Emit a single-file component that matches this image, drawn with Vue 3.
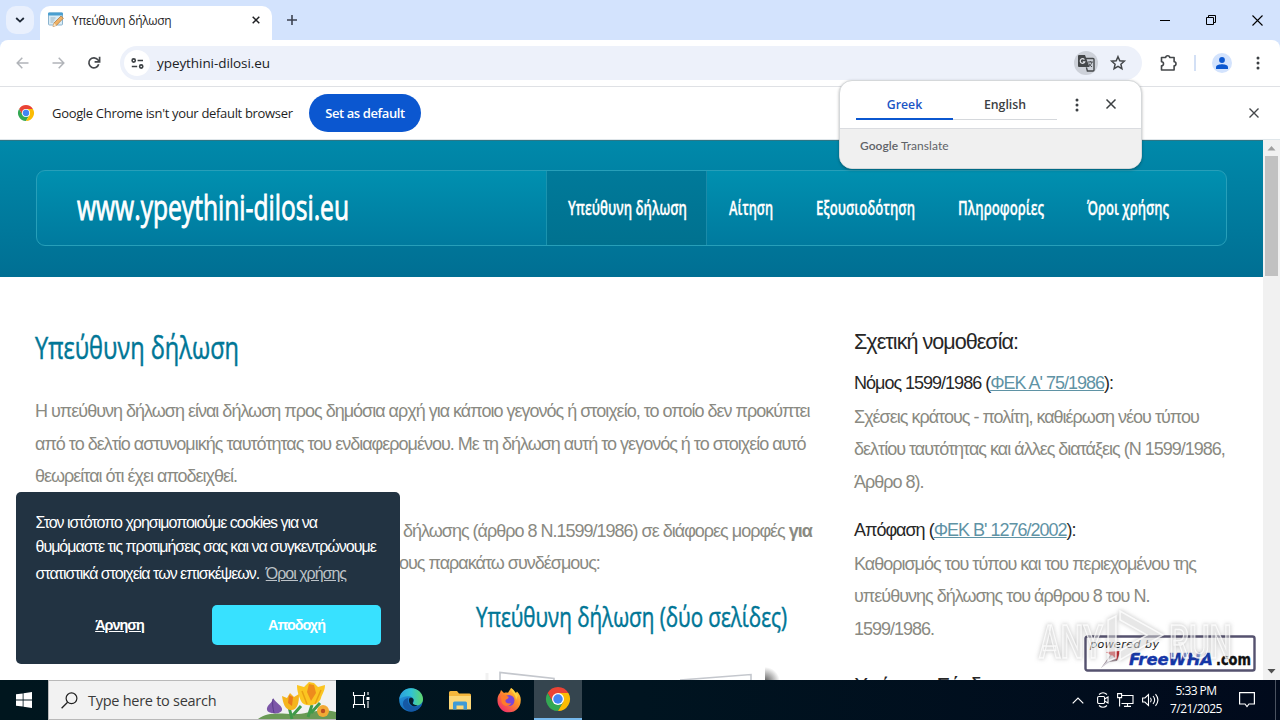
<template>
  <div class="desktop">
    <header class="browser">
      <div class="tabstrip">
        <button class="tab-search" type="button">
          <svg width="10" height="6" viewBox="0 0 10 6"><path d="M1.2 1l3.8 3.6L8.8 1" fill="none" stroke="#1f2937" stroke-width="1.8" /></svg>
        </button>
        <div class="tab">
          <svg class="favicon" width="16" height="16" viewBox="0 0 16 16">
            <rect x="0.5" y="1" width="14" height="12" rx="1" fill="#d9ebf5" stroke="#8cb4cf" />
            <rect x="0" y="0.5" width="15" height="3" rx="1" fill="#4a9fd0" />
            <path d="M2.5 6h5M2.5 8h4M2.5 10h3" stroke="#9bb5c4" />
            <path d="M5 14.5l1-3.5 7-7 2.4 2.2-7 7.2z" fill="#f0b266" stroke="#a8743b" stroke-width="0.7" />
            <path d="M5 14.5l1-3.5 2.4 2.4z" fill="#f7e3c4" />
          </svg>
          <span class="tab-title">Υπεύθυνη δήλωση</span>
          <svg width="8" height="8" viewBox="0 0 8 8"><path d="M0.7 0.7l6.6 6.6M7.3 0.7L0.7 7.3" stroke="#1f2023" stroke-width="1.5" /></svg>
        </div>
        <svg class="new-tab" width="12" height="12" viewBox="0 0 12 12"><path d="M6 1v10M1 6h10" stroke="#3c4250" stroke-width="1.6" /></svg>
        <div class="window-controls">
          <svg width="10" height="10" viewBox="0 0 10 10"><path d="M0 5.5h10" stroke="#000" /></svg>
          <svg width="10" height="10" viewBox="0 0 10 10"><path d="M0.5 2.5h7v7h-7zM2.5 2.5v-2h7v7h-2" fill="none" stroke="#000" /></svg>
          <svg width="11" height="11" viewBox="0 0 11 11"><path d="M0.5 0.5l10 10M10.5 0.5l-10 10" stroke="#000" stroke-width="1.1" /></svg>
        </div>
      </div>

      <div class="toolbar">
        <svg class="nav-back" width="13" height="12" viewBox="0 0 13 12"><path d="M6.3 0.8L1.2 6l5.1 5.2M1.4 6H12.5" fill="none" stroke="#b1b4b9" stroke-width="1.5" /></svg>
        <svg class="nav-forward" width="13" height="12" viewBox="0 0 13 12"><path d="M6.7 0.8L11.8 6l-5.1 5.2M11.6 6H0.5" fill="none" stroke="#b1b4b9" stroke-width="1.5" /></svg>
        <svg class="nav-reload" width="14" height="14" viewBox="0 0 14 14">
          <path d="M11.7 8.2A5 5 0 1 1 10.9 3.8L12 5" fill="none" stroke="#45484c" stroke-width="1.7" />
          <path d="M12.6 0.8V5.8H7.6" fill="none" stroke="#45484c" stroke-width="1.7" />
        </svg>
        <div class="omnibox">
          <span class="site-info">
            <svg width="13" height="11" viewBox="0 0 13 11" fill="none" stroke="#3c4043" stroke-width="1.6">
              <circle cx="2.7" cy="2.5" r="1.6" /><path d="M6.6 2.5H12M0.8 8.5h5.4" /><circle cx="10.2" cy="8.5" r="1.6" />
            </svg>
          </span>
          <span class="url">ypeythini-dilosi.eu</span>
          <span class="translate-badge">
            <svg width="18" height="18" viewBox="0 0 18 18">
              <path d="M2 1h6l4.5 12H2a1 1 0 0 1-1-1V2a1 1 0 0 1 1-1z" fill="#44474a" />
              <path d="M8.8 4.5H16a1 1 0 0 1 1 1V16a1 1 0 0 1-1 1h-5.6l-1-3.6" fill="none" stroke="#44474a" stroke-width="1.4" />
              <path d="M7.4 5.6a2.3 2.3 0 1 0 .3 2.3H5.8" fill="none" stroke="#dfe1e6" stroke-width="1.2" />
              <path d="M11 8h4.8M13.3 7v1M15 8c-.5 2-2 3.5-3 4.2M12 9.500c.7 1.600 1.900 2.600 3 3.400" fill="none" stroke="#44474a" />
            </svg>
          </span>
          <svg width="16" height="16" viewBox="0 0 16 16"><path d="M8 1.700l1.800 4.100 4.500.4-3.400 3 1 4.400L8 11.300l-3.900 2.300 1-4.400-3.400-3 4.500-.4z" fill="none" stroke="#44474a" stroke-width="1.5" /></svg>
        </div>
        <svg class="extensions" width="18" height="17" viewBox="0 0 18 17">
          <path d="M2.500 2.500h4.200a2 1.700 0 0 1 4 0h4.400v4.200a1.900 2 0 0 1 0 4V15H2.500v-4.200a2 2 0 0 0 0-4z" fill="none" stroke="#44474a" stroke-width="1.600" stroke-linejoin="round" />
        </svg>
        <span class="toolbar-divider"></span>
        <span class="avatar">
          <svg width="12" height="12" viewBox="0 0 12 12" fill="#0b57d0"><circle cx="6" cy="3" r="2.900" /><path d="M0 12V10.200C0 8 3.600 7.200 6 7.200s6 .8 6 3V12z" /></svg>
        </span>
        <svg class="menu-dots" width="4" height="14" viewBox="0 0 4 14" fill="#3c4043"><circle cx="2" cy="2" r="1.500" /><circle cx="2" cy="7" r="1.500" /><circle cx="2" cy="12" r="1.500" /></svg>
      </div>

      <div class="infobar">
        <svg width="16" height="16" viewBox="0 0 48 48">
          <circle cx="24" cy="24" r="24" fill="#fff" />
          <path d="M24 12h20.800A24 24 0 0 0 3.200 12l10.400 18z" fill="#ea4335" />
          <path d="M13.600 30L3.200 12A24 24 0 0 0 24 48l10.400-18z" fill="#34a853" />
          <path d="M34.400 30L24 48a24 24 0 0 0 20.800-36H24z" fill="#fbbc04" />
          <circle cx="24" cy="24" r="12" fill="#fff" /><circle cx="24" cy="24" r="9.500" fill="#4285f4" />
        </svg>
        <span class="infobar-text">Google Chrome isn't your default browser</span>
        <button class="infobar-button" type="button">Set as default</button>
        <svg class="infobar-close" width="10" height="10" viewBox="0 0 10 10"><path d="M0.500 0.500l9 9M9.500 0.500l-9 9" stroke="#44474a" stroke-width="1.400" /></svg>
      </div>
    </header>

    <div class="viewport">
      <div class="page">
        <div class="masthead">
          <div class="masthead-box">
            <svg class="logo" width="273" height="50">
              <text x="1" y="37" textLength="272" lengthAdjust="spacingAndGlyphs">www.ypeythini-dilosi.eu</text>
            </svg>
            <nav class="menu">
              <a v-for="item in menu" :key="item.label" class="menu-item" :class="{ 'is-active': item.active }">
                <svg :width="item.width" height="30">
                  <text x="0" y="22" :textLength="item.width" lengthAdjust="spacingAndGlyphs">{{ item.label }}</text>
                </svg>
              </a>
            </nav>
          </div>
        </div>

        <div class="columns">
          <main class="content">
            <svg class="title" width="206" height="46">
              <text x="0" y="33" textLength="204" lengthAdjust="spacingAndGlyphs">Υπεύθυνη δήλωση</text>
            </svg>
            <p class="intro">
              Η υπεύθυνη δήλωση είναι δήλωση προς δημόσια αρχή για κάποιο γεγονός ή στοιχείο, το οποίο δεν προκύπτει<br />
              από το δελτίο αστυνομικής ταυτότητας του ενδιαφερομένου. Με τη δήλωση αυτή το γεγονός ή το στοιχείο αυτό<br />
              θεωρείται ότι έχει αποδειχθεί.
            </p>
            <p class="forms">
              <span class="forms-first">δήλωσης (άρθρο 8 Ν.1599/1986) σε διάφορες μορφές <b>για</b></span><br />
              ους παρακάτω συνδέσμους:
            </p>
            <div class="document">
              <svg class="subtitle" width="314" height="40">
                <text x="1" y="29" textLength="311" lengthAdjust="spacingAndGlyphs">Υπεύθυνη δήλωση (δύο σελίδες)</text>
              </svg>
              <svg class="sheet" width="310" height="18" viewBox="0 0 310 18">
                <defs>
                  <radialGradient id="corner" cx="0" cy="1" r="1">
                    <stop offset="0" stop-color="#555" /><stop offset="1" stop-color="#fff" />
                  </radialGradient>
                </defs>
                <path d="M25 18V10.500l54 6v2M205 18l71-5.500V18" fill="none" stroke="#c4c7cd" stroke-width="1.600" />
                <path d="M12 11v7" stroke="#f1f1f1" stroke-width="3" />
                <rect x="290" y="5" width="15" height="15" fill="url(#corner)" />
              </svg>
            </div>
          </main>

          <aside class="sidebar">
            <h3>Σχετική νομοθεσία:</h3>
            <template v-for="law in laws" :key="law.link">
              <h4>{{ law.name }} (<a>{{ law.link }}</a>):</h4>
              <p>
                <template v-for="line in law.lines" :key="line">{{ line }}<br /></template>
              </p>
            </template>
            <h3 class="links-title">Χρήσιμοι Σύνδεσμοι:</h3>
          </aside>
        </div>

        <div class="cookie">
          <div class="cookie-text">
            Στον ιστότοπο χρησιμοποιούμε cookies για να<br />
            θυμόμαστε τις προτιμήσεις σας και να συγκεντρώνουμε<br />
            <span class="cookie-last">στατιστικά στοιχεία των επισκέψεων. <a class="cookie-link">Όροι χρήσης</a></span>
          </div>
          <div class="cookie-actions">
            <a class="cookie-deny">Άρνηση</a>
            <a class="cookie-allow">Αποδοχή</a>
          </div>
        </div>

        <div class="host-badge">
          <svg width="172" height="38" viewBox="0 0 172 38">
            <rect x="1.500" y="1.500" width="169" height="34" rx="2" fill="#fff" stroke="#55526f" stroke-width="2.400" />
            <text x="6" y="13" class="powered" textLength="69">powered by</text>
            <path d="M17 33l10-14 9-1-3 8-9 1z" fill="#9a8a92" />
            <path d="M22 17l14-1-3 9-5-4z" fill="#c92027" />
            <path d="M17 33l11-13 3 3z" fill="#d6d3dc" />
            <text x="45" y="30" class="brand" textLength="84" lengthAdjust="spacingAndGlyphs">FreeWHA</text>
            <text x="132" y="30" class="brand brand-tld" textLength="35" lengthAdjust="spacingAndGlyphs">.com</text>
          </svg>
        </div>

        <svg class="watermark" width="204" height="64" viewBox="0 0 204 64">
          <g class="mark">
            <text x="5" y="50" textLength="64" lengthAdjust="spacingAndGlyphs">ANY</text>
            <text x="135" y="50" textLength="63" lengthAdjust="spacingAndGlyphs">RUN</text>
            <path d="M74 12l8-4v42l-8 3zM86 3l43 24-43 25v-9l27-16-27-15z" />
          </g>
        </svg>
      </div>

      <div class="scrollbar">
        <svg width="17" height="15"><path d="M4.500 10.500h8l-4-4.500z" fill="#a0a0a0" /></svg>
        <div class="scroll-thumb"></div>
        <svg class="scroll-down" width="17" height="17"><path d="M4.500 6h8l-4 4.500z" fill="#505050" /></svg>
      </div>
    </div>

    <div class="translate">
      <div class="translate-top">
        <div class="lang is-active">Greek</div>
        <div class="lang">English</div>
        <svg class="translate-dots" width="4" height="14" viewBox="0 0 4 14" fill="#3c4043"><circle cx="2" cy="2" r="1.500" /><circle cx="2" cy="7" r="1.500" /><circle cx="2" cy="12" r="1.500" /></svg>
        <svg class="translate-close" width="10" height="10" viewBox="0 0 10 10"><path d="M0.500 0.500l9 9M9.500 0.500l-9 9" stroke="#3c4043" stroke-width="1.500" /></svg>
      </div>
      <div class="translate-foot"><b>Google</b> Translate</div>
    </div>

    <footer class="taskbar">
      <div class="start">
        <svg width="16" height="16" viewBox="0 0 16 16" fill="#fff"><path d="M0 2.300l6.700-.9v6.200H0zM7.500 1.300L16 0v7.600H7.500zM0 8.400h6.700v6.200L0 13.700zM7.500 8.400H16V16l-8.500-1.200z" /></svg>
      </div>
      <div class="search">
        <svg width="17" height="17" viewBox="0 0 17 17"><circle cx="10.500" cy="6.300" r="5.400" fill="none" stroke="#222" stroke-width="1.200" /><path d="M6.600 10.200L0.600 16.200" stroke="#222" stroke-width="1.300" /></svg>
        <span class="search-text">Type here to search</span>
        <svg class="flowers" width="80" height="38" viewBox="0 0 80 38">
          <path d="M2 38C14 29 30 34 42 33s22-6 38-2v7z" fill="#6a9a55" />
          <path d="M36 38l-3-12M52 36l4-12M37 34l8-9M55 32l9-10" stroke="#3f9a4a" stroke-width="3" />
          <path d="M17 17c0 5-7 7-6 12 1 4 14 5 15 0 1-4-6-7-9-12z" fill="#7c56a8" />
          <path d="M17 18c-1 5 0 9 1 14" stroke="#5a3b8a" fill="none" />
          <path d="M26 15l5 2 3-5 4 4 5-3c0 8-1 16-8 16-6 0-8-7-9-14z" fill="#f5b51d" />
          <path d="M33 14l4 2-1 9-4-3z" fill="#ea7a1b" />
          <path d="M41 4l7 2 5-5 5 1 4 4 7-2c0 6-3 9-4 13-2 8-17 10-20 3-2-5-4-9-4-16z" fill="#fbc521" />
          <path d="M53 3l5 1 2 8-5 8-4-9z" fill="#ee8b1d" />
          <path d="M46 10l5 13M65 9l-6 14" stroke="#e9a012" stroke-width="1.500" />
          <circle cx="67" cy="30" r="6" fill="#f3aa35" /><circle cx="67" cy="30" r="2.200" fill="#bd4f22" />
        </svg>
      </div>
      <div class="task">
        <svg width="17" height="16" viewBox="0 0 17 16" fill="none" stroke="#fff" stroke-width="1.100">
          <path d="M0.500 0v3.500h11V0M0.500 16v-3.500h11V16M1.500 3.500v9M10.500 3.500v9M15 0v3M15 9v7" /><path d="M13.500 5h3v3h-3z" fill="#fff" stroke="none" />
        </svg>
      </div>
      <div class="task">
        <svg width="24" height="24" viewBox="0 0 24 24">
          <defs>
            <linearGradient id="edgeTop" x1="0" x2="1"><stop offset="0" stop-color="#2b9fdc" /><stop offset="0.500" stop-color="#31c2d4" /><stop offset="1" stop-color="#5fd76a" /></linearGradient>
            <linearGradient id="edgeBody" x1="0" y1="0" x2="0.600" y2="1"><stop offset="0" stop-color="#2aa4e6" /><stop offset="1" stop-color="#0f5db0" /></linearGradient>
          </defs>
          <circle cx="12" cy="12" r="11.800" fill="url(#edgeBody)" />
          <path d="M9 11c-1 7 6 10 13 7-3 5-9 6.500-14 4C2 18.500 3 11 9 10z" fill="#1558a4" />
          <path d="M0.300 11C1.500 4 6.500 0.200 12 0.200 19 0.200 24 5.500 24 11c0 4-3 6.500-6.500 6.500-3 0-4-1.200-3.600-2.200 2.100-2 1.100-6.800-4.400-7.100-4-.2-7.700 1.300-9.200 2.800z" fill="url(#edgeTop)" />
          <path d="M10 11c1-2 4-1.500 4.500.5.300 1.600-.8 2.500-.7 3.500.2 1.500 2.500 2.500 5 2.200-4 3-9.500-.6-8.800-6.200z" fill="#071c2c" />
        </svg>
      </div>
      <div class="task">
        <svg width="22" height="19" viewBox="0 0 22 19">
          <path d="M0 1.500A1.500 1.500 0 0 1 1.500 0H8l2 2.500h10.500A1.500 1.500 0 0 1 22 4v14H0z" fill="#f5b73c" />
          <path d="M0 5h22v13.500H0z" fill="#fdd878" />
          <path d="M4 18.500V12a1.500 1.500 0 0 1 1.500-1.500h11A1.500 1.500 0 0 1 18 12v6.500h-3.500v-4h-7v4z" fill="#3f9bd6" />
        </svg>
      </div>
      <div class="task">
        <svg width="24" height="24" viewBox="0 0 24 24">
          <defs>
            <linearGradient id="fox" x1="1" y1="0" x2="0.200" y2="1"><stop offset="0" stop-color="#ffe14a" /><stop offset="0.450" stop-color="#ff9226" /><stop offset="1" stop-color="#f0286e" /></linearGradient>
          </defs>
          <path d="M3 5l1-3 3 3c1-.5 3-.5 4-.3L14 0c3 1.500 4 4 4.500 5.500L20 3.500c3 3 4 6 3.700 9A11.600 11.600 0 0 1 .5 13C.4 9.500 1 7 3 5z" fill="url(#fox)" />
          <circle cx="12" cy="12.500" r="5.500" fill="#7a45d8" />
          <path d="M4 8c3-1.500 5 0 7 .5 1.500.5 0 2.500-2 3-2 2.500 2 5 5 3.500-1 4-8 4-9.500-1z" fill="#ff7b2b" />
          <path d="M14 0c0 4 5 6 5 12l2-5z" fill="#ffd33f" />
        </svg>
      </div>
      <div class="task is-current">
        <svg width="24" height="24" viewBox="0 0 48 48">
          <path d="M24 12h20.800A24 24 0 0 0 3.200 12l10.400 18z" fill="#ea4335" />
          <path d="M13.600 30L3.200 12A24 24 0 0 0 24 48l10.400-18z" fill="#34a853" />
          <path d="M34.400 30L24 48a24 24 0 0 0 20.800-36H24z" fill="#fbbc04" />
          <circle cx="24" cy="24" r="12" fill="#fff" /><circle cx="24" cy="24" r="9.500" fill="#4285f4" />
        </svg>
      </div>
      <div class="tray">
        <svg width="12" height="7" viewBox="0 0 12 7"><path d="M0.700 6.300L6 1l5.300 5.300" fill="none" stroke="#fff" stroke-width="1.200" /></svg>
        <svg width="12" height="16" viewBox="0 0 12 16" fill="none" stroke="#fff" stroke-width="1.100"><rect x="0.600" y="4.500" width="7" height="7" rx="1.200" /><path d="M7.600 7l3.400-2v6L7.600 9M2 2.500C4.500.3 7.500.3 10 2.500M2 13.500c2.500 2.200 5.500 2.200 8 0" /></svg>
        <svg width="17" height="14" viewBox="0 0 17 14" fill="none" stroke="#fff" stroke-width="1.100"><path d="M5 2.500h11v8H4.500M10.500 10.500v3M7 13.400h7M0.600 0.600h4v4h-4zM2.600 4.600v8.800" /></svg>
        <svg width="17" height="14" viewBox="0 0 17 14" fill="none" stroke="#fff" stroke-width="1.100"><path d="M0.600 5h2.300L6.500 1.500v11L2.900 9H.6zM8.500 4.800c1 1.400 1 3 0 4.400M11 3c2 2.400 2 5.600 0 8M13.500 1.200c3 3.600 3 8 0 11.600" /></svg>
        <div class="clock"><span class="clock-time">5:33 PM</span><span>7/21/2025</span></div>
        <svg width="16" height="16" viewBox="0 0 16 16"><path d="M0.600 0.600h14.800v11.400H10L8 14.500 6 12H.6z" fill="none" stroke="#fff" stroke-width="1.200" /></svg>
        <span class="show-desktop"></span>
      </div>
    </footer>
  </div>
</template>

<script setup>
const menu = [
  { label: 'Υπεύθυνη δήλωση', width: 119, active: true },
  { label: 'Αίτηση', width: 44 },
  { label: 'Εξουσιοδότηση', width: 99 },
  { label: 'Πληροφορίες', width: 86 },
  { label: 'Όροι χρήσης', width: 82 },
]

const laws = [
  {
    name: 'Νόμος 1599/1986',
    link: "ΦΕΚ Α' 75/1986",
    lines: [
      'Σχέσεις κράτους - πολίτη, καθιέρωση νέου τύπου',
      'δελτίου ταυτότητας και άλλες διατάξεις (Ν 1599/1986,',
      'Άρθρο 8).',
    ],
  },
  {
    name: 'Απόφαση',
    link: "ΦΕΚ Β' 1276/2002",
    lines: [
      'Καθορισμός του τύπου και του περιεχομένου της',
      'υπεύθυνης δήλωσης του άρθρου 8 του Ν.',
      '1599/1986.',
    ],
  },
]
</script>

<style>
body {
  margin: 0;
  overflow: hidden;
}
</style>

<style scoped>
.desktop {
  position: relative;
  width: 1280px;
  height: 720px;
  overflow: hidden;
  display: flex;
  flex-direction: column;
  background: #fff;
  font-family: 'Open Sans', 'Noto Sans', sans-serif;
  white-space: nowrap;
}

.desktop svg {
  display: block;
  flex-shrink: 0;
  overflow: visible;
}

/* browser chrome */
.browser {
  height: 140px;
  flex-shrink: 0;
  background: #d3e3fd;
}

.tabstrip {
  height: 40px;
  display: flex;
  align-items: center;
}

.tab-search {
  width: 28px;
  height: 28px;
  margin-left: 6px;
  padding: 0;
  border: none;
  border-radius: 10px;
  background: #e9f0fd;
  display: flex;
  align-items: center;
  justify-content: center;
}

.tab {
  width: 232px;
  height: 34px;
  margin: 6px 0 0 6px;
  padding: 0 12px 6px 8px;
  display: flex;
  align-items: center;
  border-radius: 10px 10px 0 0;
  background: #fff;
  box-sizing: border-box;
}

.tab-title {
  flex: 1;
  margin-left: 8px;
  color: #1f1f1f;
  font-size: 12px;
  letter-spacing: -0.3px;
}

.new-tab {
  margin-left: 14px;
}

.window-controls {
  margin-left: auto;
  margin-right: 17px;
  display: flex;
  align-items: center;
  gap: 36px;
}

.toolbar {
  height: 46px;
  display: flex;
  align-items: center;
  border-bottom: 1px solid #dfe1e5;
  border-radius: 8px 8px 0 0;
  background: #fff;
}

.nav-back {
  margin-left: 16px;
}

.nav-forward {
  margin-left: 23px;
}

.nav-reload {
  margin-left: 22px;
}

.omnibox {
  width: 1022px;
  height: 34px;
  margin-left: 19px;
  padding: 0 16px 0 4px;
  display: flex;
  align-items: center;
  border-radius: 17px;
  background: #edf1fa;
  box-sizing: border-box;
}

.site-info {
  width: 26px;
  height: 26px;
  display: flex;
  align-items: center;
  justify-content: center;
  border-radius: 50%;
  background: #fff;
}

.url {
  flex: 1;
  margin-left: 7px;
  color: #202124;
  font-size: 13.5px;
  letter-spacing: -0.07px;
}

.translate-badge {
  width: 24px;
  height: 24px;
  margin-right: 12px;
  display: flex;
  align-items: center;
  justify-content: center;
  border-radius: 50%;
  background: #cdd1d9;
}

.extensions {
  margin-left: 17px;
}

.toolbar-divider {
  width: 2px;
  height: 16px;
  margin-left: 17px;
  background: #d3e0f5;
}

.avatar {
  width: 20px;
  height: 20px;
  margin-left: 16px;
  display: flex;
  align-items: center;
  justify-content: center;
  border-radius: 50%;
  background: #d3e3fd;
}

.menu-dots {
  margin-left: 24px;
}

.infobar {
  height: 53px;
  padding: 0 21px 0 18px;
  display: flex;
  align-items: center;
  border-bottom: 1px solid #dfe6ea;
  background: #fff;
  box-sizing: border-box;
}

.infobar-text {
  width: 241px;
  margin-left: 18px;
  color: #1f1f1f;
  font-size: 13px;
  letter-spacing: -0.32px;
}

.infobar-button {
  width: 112px;
  height: 38px;
  margin-left: 16px;
  padding: 0;
  border: none;
  border-radius: 19px;
  background: #0b57d0;
  color: #fff;
  font: 600 13px 'Open Sans', sans-serif;
  letter-spacing: -0.4px;
}

.infobar-close {
  margin-left: auto;
}

/* web page */
.viewport {
  height: 540px;
  flex-shrink: 0;
  display: flex;
}

.page {
  position: relative;
  width: 1263px;
  height: 540px;
  overflow: hidden;
  background: #fff;
  font-family: 'Liberation Sans', Arial, sans-serif;
  font-size: 18px;
  line-height: 32.4px;
  letter-spacing: -1px;
  color: #8a8a82;
}

.masthead {
  height: 137px;
  padding: 30px 36px 0;
  border-top: 1px solid #2c7686;
  background: linear-gradient(#0089aa, #006f93);
  box-sizing: border-box;
}

.masthead-box {
  height: 76px;
  margin-top: -1px;
  padding-left: 39px;
  display: flex;
  align-items: center;
  border: 1px solid #279fb9;
  border-radius: 9px;
  background: linear-gradient(#0090b0, #007a9e);
  box-sizing: border-box;
}

.logo text {
  font-family: 'Open Sans', sans-serif;
  font-size: 35px;
  letter-spacing: 0;
  fill: #fff;
  stroke: #fff;
  stroke-width: 0.9px;
}

.menu {
  height: 100%;
  margin-left: 197px;
  display: flex;
}

.menu-item {
  padding: 0 21px 0 22px;
  display: flex;
  align-items: center;
}

.menu-item.is-active {
  padding: 0 19px 0 21px;
  border-left: 1px solid #1b93ae;
  border-right: 1px solid #1b8ba9;
  background: linear-gradient(#007a9a, #00718f);
}

.menu-item text {
  font-family: 'Open Sans', sans-serif;
  font-size: 19px;
  font-weight: 600;
  letter-spacing: 0;
  fill: #fff;
  stroke: #fff;
  stroke-width: 0.3px;
}

.columns {
  display: flex;
}

.content {
  width: 854px;
  flex-shrink: 0;
  padding: 49px 0 0 35px;
  box-sizing: border-box;
}

.title text,
.subtitle text {
  font-family: 'Open Sans', sans-serif;
  letter-spacing: 0;
  fill: #007696;
  stroke: #007696;
  stroke-width: 0.5px;
}

.title text {
  font-size: 31px;
}

.subtitle text {
  font-size: 27px;
}

.intro {
  margin: 23.4px 0 22.4px;
}

.forms {
  margin: 0;
  padding-left: 364px;
}

.forms-first {
  margin-left: 4px;
}

.document {
  padding-left: 440px;
}

.subtitle {
  margin-top: 18.6px;
}

.sheet {
  margin-top: 24px;
}

.sidebar {
  padding-top: 48px;
}

.sidebar h3 {
  margin: 0;
  color: #272727;
  font-size: 21.6px;
  font-weight: 400;
  line-height: 34px;
}

.sidebar h4 {
  margin: 8px 0 1.6px;
  color: #272727;
  font-size: 18px;
  font-weight: 400;
}

.sidebar h4 a {
  color: #5f93a5;
  text-decoration: underline;
}

.sidebar p {
  margin: 0 0 15.700px;
}

.sidebar .links-title {
  margin-top: 24px;
}

/* cookie notice */
.cookie {
  position: absolute;
  left: 16px;
  top: 352px;
  width: 384px;
  height: 172px;
  padding: 19px 19px 19px;
  display: flex;
  flex-direction: column;
  justify-content: space-between;
  border-radius: 5px;
  background: #223342;
  color: #fff;
  font-size: 16px;
  line-height: 24px;
  box-sizing: border-box;
}

.cookie-text {
  padding-left: 0.5px;
}

.cookie-last {
  line-height: 30px;
}

.cookie-link {
  margin-left: 3px;
  color: #bcc2c7;
  text-decoration: underline;
}

.cookie-actions {
  display: flex;
  font-size: 14.4px;
  font-weight: 700;
  line-height: 40px;
  text-align: center;
}

.cookie-deny {
  width: 169px;
  margin-right: 8px;
  text-decoration: underline;
}

.cookie-allow {
  width: 169px;
  border-radius: 5px;
  background: #38e1ff;
}

.host-badge {
  position: absolute;
  left: 1084px;
  top: 495px;
}

.powered {
  font: italic 11px 'DejaVu Sans', sans-serif;
  letter-spacing: 0;
  fill: #222;
}

.brand {
  font: italic 700 16px 'DejaVu Sans', sans-serif;
  letter-spacing: 0;
  fill: #1536a8;
  stroke: #1536a8;
  stroke-width: 0.4px;
}

.brand-tld {
  font-style: normal;
  fill: #111;
  stroke: #111;
}

.watermark {
  position: absolute;
  left: 1034px;
  top: 468px;
}

.mark {
  fill: #fff;
  fill-opacity: 0.4;
  stroke: #fff;
  stroke-opacity: 0.8;
  stroke-width: 1.5px;
  filter: drop-shadow(0 0 2px rgba(80, 80, 80, 0.5));
}

.mark text {
  font: 500 46px Roboto, sans-serif;
  letter-spacing: 0;
}

.scrollbar {
  width: 17px;
  display: flex;
  flex-direction: column;
  background: #f1f1f1;
}

.scroll-thumb {
  width: 13px;
  height: 120px;
  margin: 1px 0 0 2px;
  background: #c1c1c1;
}

.scroll-down {
  margin-top: auto;
}

/* translate bubble */
.translate {
  position: absolute;
  left: 839px;
  top: 80px;
  width: 303px;
  height: 89px;
  overflow: hidden;
  border: 1px solid #d5d8da;
  border-radius: 13px;
  background: #fff;
  box-shadow: 0 1px 3px rgba(0, 0, 0, 0.3);
  box-sizing: border-box;
}

.translate-top {
  height: 47px;
  padding-left: 16px;
  display: flex;
  align-items: center;
  border-bottom: 1px solid #dadce0;
}

.lang {
  width: 104px;
  height: 39px;
  margin-bottom: 8px;
  align-self: flex-end;
  border-bottom: 1px solid #d5d8dc;
  color: #3c4043;
  font-size: 12.3px;
  font-weight: 600;
  line-height: 47px;
  text-align: center;
  box-sizing: border-box;
}

.lang.is-active {
  width: 97px;
  border-bottom: 2px solid #0b57d0;
  color: #1a55c4;
}

.translate-dots {
  margin-left: 18px;
}

.translate-close {
  margin: 0 0 1px 27px;
}

.translate-foot {
  height: 41px;
  padding-left: 20px;
  background: #f0f0f0;
  color: #5f6368;
  font: 12px/33px Lato, sans-serif;
  letter-spacing: 0.05px;
}

.translate-foot b {
  font-weight: 600;
}

/* taskbar */
.taskbar {
  height: 40px;
  flex-shrink: 0;
  display: flex;
  background: linear-gradient(90deg, #00161e, #001420 50%, #010a1c);
}

.start {
  width: 48px;
  display: flex;
  align-items: center;
  justify-content: center;
}

.search {
  width: 288px;
  padding-left: 12px;
  display: flex;
  align-items: center;
  border: 1px solid #b9b9b9;
  border-right: none;
  background: #f2f2f2;
  box-sizing: border-box;
}

.search-text {
  flex: 1;
  margin-left: 10px;
  color: #3a3a3a;
  font-size: 14.5px;
  letter-spacing: -0.27px;
}

.task {
  width: 49px;
  display: flex;
  align-items: center;
  justify-content: center;
}

.task:nth-child(3) {
  width: 50px;
}

.task.is-current {
  width: 48px;
  margin-left: 1px;
  border-bottom: 2px solid #76b9ed;
  background: #35454f;
  box-sizing: border-box;
}

.tray {
  margin-left: auto;
  display: flex;
  align-items: center;
  gap: 8px;
  color: #fff;
}

.tray svg:first-child {
  margin-right: 5px;
}

.clock {
  width: 58px;
  margin-right: 6px;
  display: flex;
  flex-direction: column;
  align-items: center;
  font-size: 12px;
  line-height: 18px;
  letter-spacing: -0.55px;
}

.show-desktop {
  width: 5px;
  height: 40px;
  margin-left: 12px;
  border-left: 1px solid #4a5260;
  box-sizing: border-box;
}
</style>
